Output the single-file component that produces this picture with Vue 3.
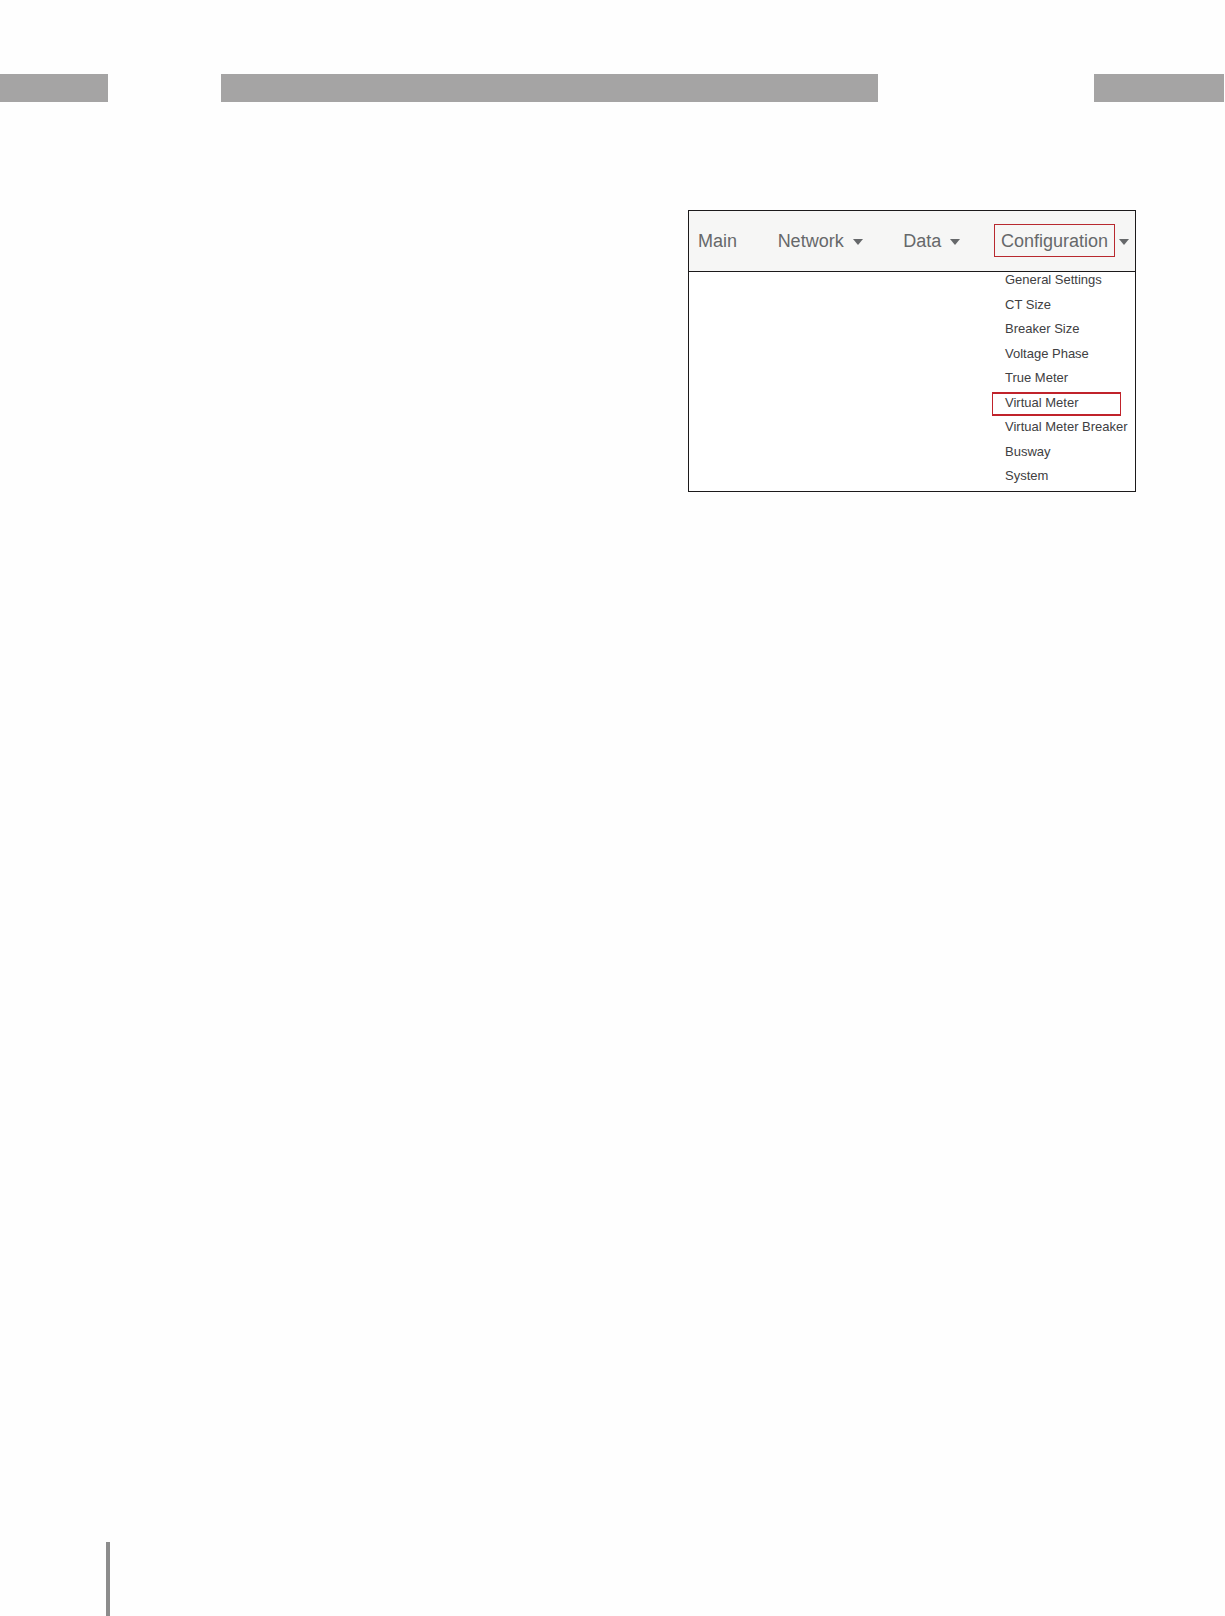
<script setup>
const tabs = [
  { label: 'Main', menu: false },
  { label: 'Network', menu: true },
  { label: 'Data', menu: true },
  { label: 'Configuration', menu: true, marked: true },
]

const entries = [
  'General Settings',
  'CT Size',
  'Breaker Size',
  'Voltage Phase',
  'True Meter',
  'Virtual Meter',
  'Virtual Meter Breaker',
  'Busway',
  'System',
]
const markedEntry = 'Virtual Meter'
</script>

<template>
  <div class="page">
    <header class="bands">
      <span class="band"></span>
      <span class="band"></span>
      <span class="band"></span>
    </header>

    <main class="content">
      <section class="panel">
        <nav class="tabs">
          <template v-for="tab in tabs" :key="tab.label">
            <button v-if="tab.menu" type="button" class="tab" :class="{ marked: tab.marked }">
              <span class="label">{{ tab.label }}</span>
              <svg class="caret" width="10" height="6" viewBox="0 0 10 6" aria-hidden="true">
                <path d="M0 0h10L5 6z" fill="currentColor" />
              </svg>
            </button>
            <a v-else href="#" class="tab">{{ tab.label }}</a>
          </template>
        </nav>
        <ul class="menu">
          <li v-for="entry in entries" :key="entry">
            <a href="#" class="entry" :class="{ marked: entry === markedEntry }">{{ entry }}</a>
          </li>
        </ul>
      </section>
    </main>

    <footer class="foot"></footer>
  </div>
</template>

<style>
body {
  margin: 0;
  background: #fefefe;
}
</style>

<style scoped>
.page {
  display: flex;
  flex-direction: column;
  min-height: 100vh;
  font-family: 'Liberation Sans', Arial, sans-serif;
}

.bands {
  display: grid;
  grid-template-columns: 108px 1fr 130px;
  margin-top: 74px;
  padding-right: 1px;
}

.band {
  height: 28px;
  background: #a5a4a4;
}

.band:nth-child(2) {
  margin-left: 113px;
  margin-right: 216px;
}

.content {
  flex: 1;
  display: flex;
  justify-content: flex-end;
  align-items: flex-start;
  padding: 108px 89px 40px 40px;
}

.panel {
  box-sizing: border-box;
  width: 448px;
  border: 1px solid #1c1a1b;
  background: #fff;
}

.tabs {
  display: flex;
  align-items: center;
  justify-content: space-between;
  height: 60px;
  padding: 0 6px 0 9px;
  background: #f6f6f5;
  border-bottom: 1px solid #1c1a1b;
}

.tab {
  display: flex;
  align-items: center;
  gap: 9px;
  padding: 0;
  border: 0;
  background: none;
  color: #66686a;
  font: inherit;
  font-size: 18px;
  line-height: 24px;
  text-decoration: none;
  cursor: pointer;
}

.tab.marked {
  gap: 11px;
}

.label {
  position: relative;
}

.tab.marked .label::after {
  content: '';
  position: absolute;
  inset: -5px -7px -4px;
  border: 1px solid #b8292f;
}

.caret {
  margin-top: 2px;
}

.menu {
  display: flex;
  flex-direction: column;
  justify-content: space-between;
  box-sizing: border-box;
  width: 130px;
  height: 219px;
  margin: 0 0 0 auto;
  padding: 0 0 8px;
  list-style: none;
}

.menu li {
  display: flex;
}

.entry {
  position: relative;
  color: #404042;
  font-size: 13px;
  line-height: 15px;
  white-space: nowrap;
  text-decoration: none;
}

.entry.marked::after {
  content: '';
  position: absolute;
  top: -3px;
  left: -13px;
  box-sizing: border-box;
  width: 129px;
  height: 24px;
  border: 1px solid #c0232b;
  border-width: 2px 1px;
}

.foot {
  height: 74px;
  margin-left: 106px;
  border-left: 4px solid #8c8c8c;
}
</style>
